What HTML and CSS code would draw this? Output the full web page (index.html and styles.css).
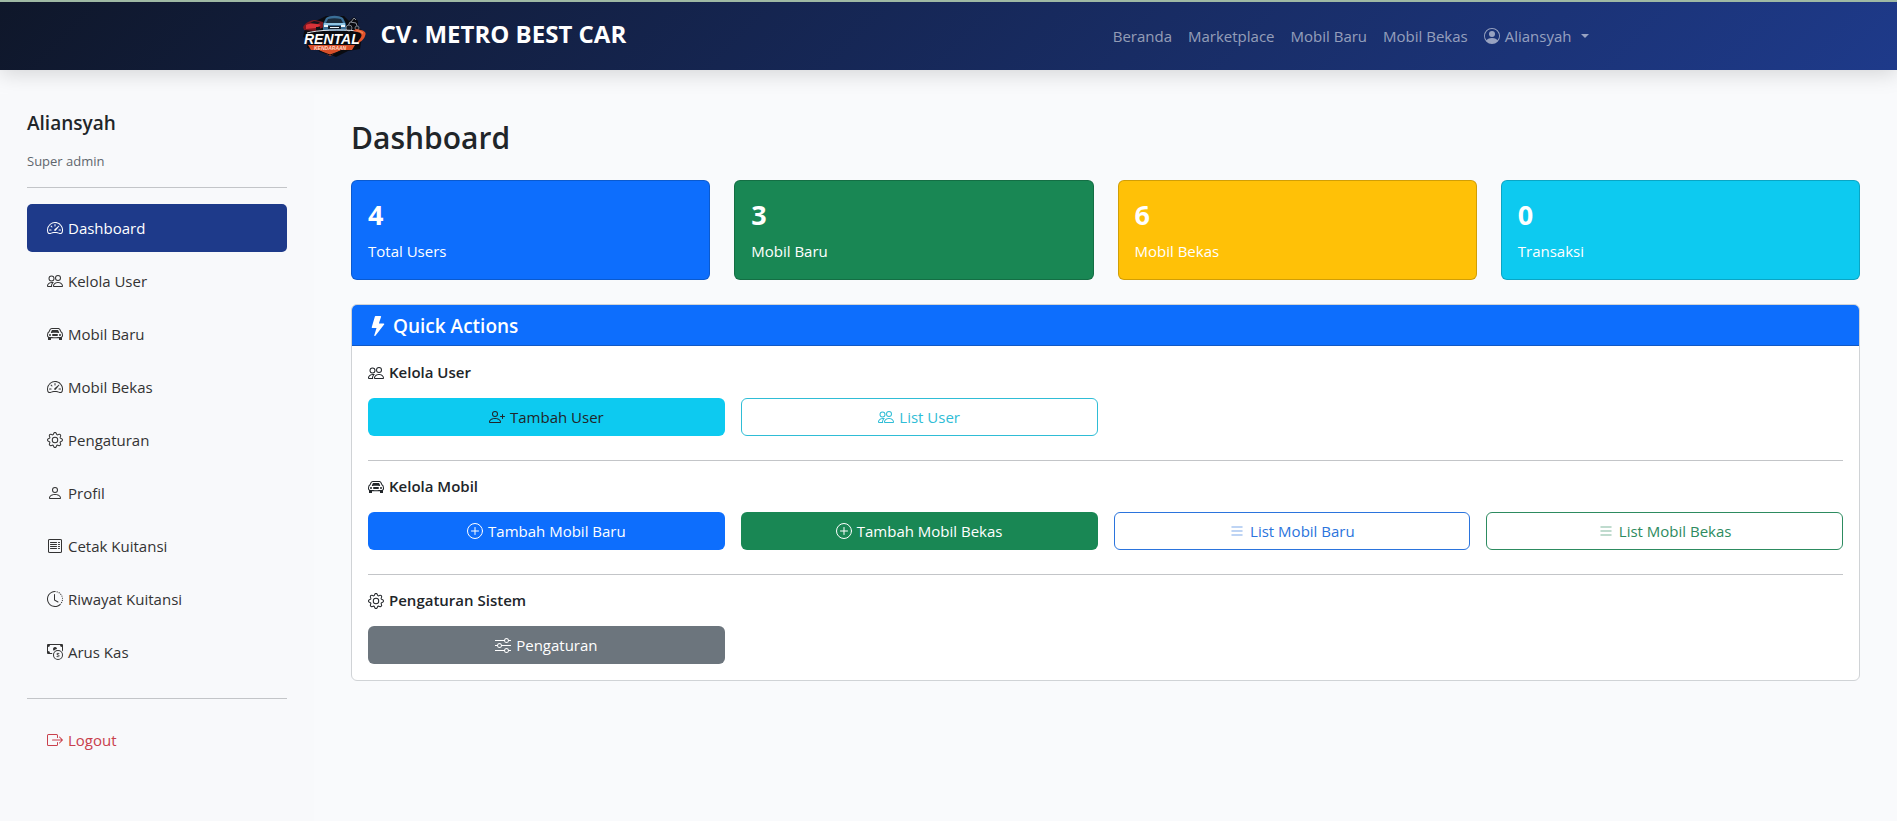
FILE: index.html
```html
<!DOCTYPE html>
<html lang="id">
<head>
<meta charset="utf-8">
<meta name="viewport" content="width=device-width, initial-scale=1">
<title>Dashboard - CV. METRO BEST CAR</title>
<link rel="stylesheet" href="styles.css">
</head>
<body>
<svg class="sprite" aria-hidden="true">
  <symbol id="speedometer" viewBox="0 0 16 16"><path d="M8 4a.5.5 0 0 1 .5.5V6a.5.5 0 0 1-1 0V4.500A.5.5 0 0 1 8 4M3.732 5.732a.5.5 0 0 1 .707 0l.915.914a.5.5 0 1 1-.708.708l-.914-.915a.5.5 0 0 1 0-.707M2 10a.5.5 0 0 1 .5-.5h1.586a.5.5 0 0 1 0 1H2.500A.5.5 0 0 1 2 10m9.500 0a.5.5 0 0 1 .5-.5h1.500a.5.5 0 0 1 0 1H12a.5.5 0 0 1-.5-.5m.754-4.246a.39.39 0 0 0-.527-.02L7.547 9.310a.91.91 0 1 0 1.302 1.258l3.434-4.297a.39.39 0 0 0-.029-.518z"/><path fill-rule="evenodd" d="M0 10a8 8 0 1 1 15.547 2.661c-.442 1.253-1.845 1.602-2.932 1.250C11.309 13.488 9.475 13 8 13c-1.474 0-3.310.488-4.615.911-1.087.352-2.490.003-2.932-1.250A8 8 0 0 1 0 10m8-7a7 7 0 0 0-6.603 9.329c.203.575.923.876 1.680.630C4.397 12.533 6.358 12 8 12s3.604.532 4.923.960c.757.245 1.477-.056 1.680-.631A7 7 0 0 0 8 3"/></symbol>
  <symbol id="people" viewBox="0 0 16 16"><path d="M15 14s1 0 1-1-1-4-5-4-5 3-5 4 1 1 1 1zm-7.978-1L7 12.996c.001-.264.167-1.030.760-1.720C8.312 10.629 9.282 10 11 10c1.717 0 2.687.630 3.240 1.276.593.690.758 1.457.760 1.720l-.008.002-.014.002zM11 7a2 2 0 1 0 0-4 2 2 0 0 0 0 4m3-2a3 3 0 1 1-6 0 3 3 0 0 1 6 0M6.936 9.280a6 6 0 0 0-1.230-.247A7 7 0 0 0 5 9c-4 0-5 3-5 4q0 1 1 1h4.216A2.240 2.240 0 0 1 5 13c0-1.010.377-2.042 1.090-2.904.243-.294.526-.569.846-.816M4.920 10A5.500 5.500 0 0 0 4 13H1c0-.260.164-1.030.760-1.724.545-.636 1.492-1.256 3.160-1.275ZM1.500 5.500a3 3 0 1 1 6 0 3 3 0 0 1-6 0m3-2a2 2 0 1 0 0 4 2 2 0 0 0 0-4"/></symbol>
  <symbol id="car" viewBox="0 0 16 16"><path d="M4 9a1 1 0 1 1-2 0 1 1 0 0 1 2 0m10 0a1 1 0 1 1-2 0 1 1 0 0 1 2 0M6 8a1 1 0 0 0 0 2h4a1 1 0 1 0 0-2zM4.862 4.276 3.906 6.190a.51.51 0 0 0 .497.731c.910-.073 2.350-.170 3.597-.170s2.688.097 3.597.170a.51.51 0 0 0 .497-.731l-.956-1.913A.5.5 0 0 0 10.691 4H5.309a.5.5 0 0 0-.447.276"/><path fill-rule="evenodd" d="M2.520 3.515A2.500 2.500 0 0 1 4.820 2h6.362c1 0 1.904.596 2.298 1.515l.792 1.848c.075.175.210.319.380.404.500.250.855.715.965 1.262l.335 1.679q.050.242.049.490v.413c0 .814-.390 1.543-1 1.997V13.500a.5.5 0 0 1-.5.5h-2a.5.5 0 0 1-.5-.5v-1.338c-1.292.048-2.745.088-4 .088s-2.708-.040-4-.088V13.500a.5.5 0 0 1-.5.5h-2a.5.5 0 0 1-.5-.5v-1.892c-.610-.454-1-1.183-1-1.997v-.413a2.500 2.500 0 0 1 .049-.490l.335-1.680c.110-.546.465-1.012.964-1.261a.8.8 0 0 0 .381-.404l.792-1.848ZM4.820 3a1.500 1.500 0 0 0-1.379.910l-.792 1.847a1.800 1.800 0 0 1-.853.904.8.8 0 0 0-.430.564L1.030 8.904a1.500 1.500 0 0 0-.030.294v.413c0 .796.620 1.448 1.408 1.484 1.555.070 3.786.155 5.592.155s4.037-.084 5.592-.155A1.480 1.480 0 0 0 15 9.611v-.413q0-.148-.030-.294l-.335-1.680a.8.8 0 0 0-.430-.563 1.800 1.800 0 0 1-.853-.904l-.792-1.848A1.500 1.500 0 0 0 11.180 3z"/></symbol>
  <symbol id="gear" viewBox="0 0 16 16"><path d="M8 4.754a3.246 3.246 0 1 0 0 6.492 3.246 3.246 0 0 0 0-6.492M5.754 8a2.246 2.246 0 1 1 4.492 0 2.246 2.246 0 0 1-4.492 0"/><path d="M9.796 1.343c-.527-1.790-3.065-1.790-3.592 0l-.094.319a.873.873 0 0 1-1.255.520l-.292-.160c-1.640-.892-3.433.902-2.540 2.541l.159.292a.873.873 0 0 1-.520 1.255l-.319.094c-1.790.527-1.790 3.065 0 3.592l.319.094a.873.873 0 0 1 .520 1.255l-.160.292c-.892 1.640.901 3.434 2.541 2.540l.292-.159a.873.873 0 0 1 1.255.520l.094.319c.527 1.790 3.065 1.790 3.592 0l.094-.319a.873.873 0 0 1 1.255-.520l.292.160c1.640.893 3.434-.902 2.540-2.541l-.159-.292a.873.873 0 0 1 .520-1.255l.319-.094c1.790-.527 1.790-3.065 0-3.592l-.319-.094a.873.873 0 0 1-.520-1.255l.160-.292c.893-1.640-.902-3.433-2.541-2.540l-.292.159a.873.873 0 0 1-1.255-.520zm-2.633.283c.246-.835 1.428-.835 1.674 0l.094.319a1.873 1.873 0 0 0 2.693 1.115l.291-.160c.764-.415 1.600.420 1.184 1.185l-.159.292a1.873 1.873 0 0 0 1.116 2.692l.318.094c.835.246.835 1.428 0 1.674l-.319.094a1.873 1.873 0 0 0-1.115 2.693l.160.291c.415.764-.420 1.600-1.185 1.184l-.291-.159a1.873 1.873 0 0 0-2.693 1.116l-.094.318c-.246.835-1.428.835-1.674 0l-.094-.319a1.873 1.873 0 0 0-2.692-1.115l-.292.160c-.764.415-1.600-.420-1.184-1.185l.159-.291A1.873 1.873 0 0 0 1.945 8.930l-.319-.094c-.835-.246-.835-1.428 0-1.674l.319-.094A1.873 1.873 0 0 0 3.060 4.377l-.160-.292c-.415-.764.420-1.600 1.185-1.184l.292.159a1.873 1.873 0 0 0 2.692-1.115z"/></symbol>
  <symbol id="person" viewBox="0 0 16 16"><path d="M8 8a3 3 0 1 0 0-6 3 3 0 0 0 0 6m2-3a2 2 0 1 1-4 0 2 2 0 0 1 4 0m4 8c0 1-1 1-1 1H3s-1 0-1-1 1-4 6-4 6 3 6 4m-1-.004c-.001-.246-.154-.986-.832-1.664C11.516 10.680 10.289 10 8 10s-3.516.680-4.168 1.332c-.678.678-.830 1.418-.832 1.664z"/></symbol>
  <symbol id="receipt" viewBox="0 0 16 16"><path fill="none" stroke="currentColor" stroke-linejoin="round" d="M2 1.200 3 2l1-1 1 1 1-1 1 1 1-1 1 1 1-1 1 1 1-1 1 1 1-.8.5.8v12l-.5.8-1-.8-1 1-1-1-1 1-1-1-1 1-1-1-1 1-1-1-1 1-1-1-1 .8-.5-.8V2z"/><path fill="none" stroke="currentColor" stroke-linecap="round" d="M3.500 4.500h6m-6 2h6m-6 2h6m-6 2h6m2-6h1m-1 2h1m-1 2h1m-1 2h1"/></symbol>
  <symbol id="history" viewBox="0 0 16 16"><path d="M8.515 1.019A7 7 0 0 0 8 1V0a8 8 0 0 1 .589.022zm2.004.450a7 7 0 0 0-.985-.299l.219-.976q.576.129 1.126.342zm1.370.710a7 7 0 0 0-.439-.270l.493-.870a8 8 0 0 1 .979.654l-.615.789a7 7 0 0 0-.418-.302zm1.834 1.790a7 7 0 0 0-.653-.796l.724-.690q.406.429.747.910zm.744 1.352a7 7 0 0 0-.214-.468l.893-.450a8 8 0 0 1 .450 1.088l-.950.313a7 7 0 0 0-.179-.483m.530 2.507a7 7 0 0 0-.100-1.025l.985-.170q.100.580.116 1.170zm-.131 1.538q.050-.254.081-.510l.993.123a8 8 0 0 1-.230 1.155l-.964-.267q.069-.247.120-.501m-.952 2.379q.276-.436.486-.908l.914.405q-.240.540-.555 1.038zm-.964 1.205q.183-.183.350-.378l.758.653a8 8 0 0 1-.401.432z"/><path d="M8 1a7 7 0 1 0 4.950 11.950l.707.707A8.001 8.001 0 1 1 8 0z"/><path d="M7.500 3a.5.5 0 0 1 .5.5v5.210l3.248 1.856a.5.5 0 0 1-.496.868l-3.500-2A.5.5 0 0 1 7 9V3.500a.5.5 0 0 1 .5-.5"/></symbol>
  <symbol id="cash" viewBox="0 0 16 16"><path fill-rule="evenodd" d="M11 15a4 4 0 1 0 0-8 4 4 0 0 0 0 8m5-4a5 5 0 1 1-10 0 5 5 0 0 1 10 0"/><path d="M9.438 11.944c.047.596.518 1.060 1.363 1.116v.440h.375v-.443c.875-.061 1.386-.529 1.386-1.207 0-.618-.390-.936-1.090-1.100l-.296-.070v-1.200c.376.043.614.248.671.532h.658c-.047-.575-.540-1.024-1.329-1.073V8.500h-.375v.450c-.747.073-1.255.522-1.255 1.158 0 .562.378.920 1.007 1.066l.248.061v1.272c-.384-.058-.639-.270-.696-.563h-.668zm1.360-1.354c-.369-.085-.569-.260-.569-.522 0-.294.216-.514.572-.578v1.100zm.432.746c.449.104.655.272.655.569 0 .339-.257.571-.709.614v-1.195z"/><path d="M1 0a1 1 0 0 0-1 1v8a1 1 0 0 0 1 1h4.083q.088-.517.258-1H3a2 2 0 0 0-2-2V3a2 2 0 0 0 2-2h10a2 2 0 0 0 2 2v3.528c.380.340.717.728 1 1.154V1a1 1 0 0 0-1-1z"/><path d="M9.998 5.083 10 5a2 2 0 1 0-3.132 1.650 6 6 0 0 1 3.130-1.567"/></symbol>
  <symbol id="logout" viewBox="0 0 16 16"><path d="M10 12.500a.5.5 0 0 1-.5.5h-8a.5.5 0 0 1-.5-.5v-9a.5.5 0 0 1 .5-.5h8a.5.5 0 0 1 .5.5v2a.5.5 0 0 0 1 0v-2A1.500 1.500 0 0 0 9.500 2h-8A1.500 1.500 0 0 0 0 3.500v9A1.500 1.500 0 0 0 1.500 14h8a1.500 1.500 0 0 0 1.500-1.500v-2a.5.5 0 0 0-1 0z"/><path d="M15.854 8.354a.5.5 0 0 0 0-.708l-3-3a.5.5 0 0 0-.708.708L14.293 7.500H5.500a.5.5 0 0 0 0 1h8.793l-2.147 2.146a.5.5 0 0 0 .708.708z"/></symbol>
  <symbol id="account" viewBox="0 0 16 16"><path d="M11 6a3 3 0 1 1-6 0 3 3 0 0 1 6 0"/><path fill-rule="evenodd" d="M0 8a8 8 0 1 1 16 0A8 8 0 0 1 0 8m8-7a7 7 0 0 0-5.468 11.370C3.242 11.226 4.805 10 8 10s4.757 1.225 5.468 2.370A7 7 0 0 0 8 1"/></symbol>
  <symbol id="lightning" viewBox="0 0 16 16"><path d="M5.520.359A.5.5 0 0 1 6 0h4a.5.5 0 0 1 .474.658L8.694 6H12.500a.5.5 0 0 1 .395.807l-7 9a.5.5 0 0 1-.873-.454L6.823 9.500H3.500a.5.5 0 0 1-.480-.641z"/></symbol>
  <symbol id="person-plus" viewBox="0 0 16 16"><path d="M6 8a3 3 0 1 0 0-6 3 3 0 0 0 0 6m2-3a2 2 0 1 1-4 0 2 2 0 0 1 4 0m4 8c0 1-1 1-1 1H1s-1 0-1-1 1-4 6-4 6 3 6 4m-1-.004c-.001-.246-.154-.986-.832-1.664C9.516 10.680 8.289 10 6 10s-3.516.680-4.168 1.332c-.678.678-.830 1.418-.832 1.664z"/><path d="M13.500 5a.5.5 0 0 1 .5.5V7h1.500a.5.5 0 0 1 0 1H14v1.500a.5.5 0 0 1-1 0V8h-1.500a.5.5 0 0 1 0-1H13V5.500a.5.5 0 0 1 .5-.5"/></symbol>
  <symbol id="plus" viewBox="0 0 16 16"><g fill="none" stroke="currentColor" stroke-linecap="round"><circle cx="8" cy="8" r="7.500"/><path d="M8 4.500v7M4.500 8h7"/></g></symbol>
  <symbol id="list" viewBox="0 0 16 16"><path fill="none" stroke="currentColor" stroke-width="1.500" stroke-linecap="round" d="M3 4h10M3 8h10M3 12h10"/></symbol>
  <symbol id="sliders" viewBox="0 0 16 16"><path fill-rule="evenodd" d="M11.500 2a1.500 1.500 0 1 0 0 3 1.500 1.500 0 0 0 0-3M9.050 3a2.500 2.500 0 0 1 4.900 0H16v1h-2.050a2.500 2.500 0 0 1-4.900 0H0V3zM4.500 7a1.500 1.500 0 1 0 0 3 1.500 1.500 0 0 0 0-3M2.050 8a2.500 2.500 0 0 1 4.900 0H16v1H6.950a2.500 2.500 0 0 1-4.900 0H0V8zm9.450 4a1.500 1.500 0 1 0 0 3 1.500 1.500 0 0 0 0-3m-2.450 1a2.500 2.500 0 0 1 4.900 0H16v1h-2.050a2.500 2.500 0 0 1-4.900 0H0v-1z"/></symbol>
</svg>

<header class="navbar">
  <div class="navbar-inner">
    <a class="brand" href="#">
      <svg class="logo" viewBox="0 0 66 42" role="img" aria-label="Rental Kendaraan">
        <path fill="#0a0b10" d="M2 17 6 9l12-5 6-3h18l5 5 5-4 4 4v6l5 4-3 18-12 2-12 6-14-6-15-3 1-9-5-2z"/>
        <path fill="#7d1820" d="M1 12c3-5 8-7 12-7l8 2 1 5-9 4-11-1z"/>
        <path fill="#d83238" d="M4 10c4-2 9-2 15 0l-5 3-10 1z"/>
        <path fill="#14151c" d="m8 8 4-2 6 1-2 2z"/>
        <path fill="#101218" d="M14 12h4v3h-4z"/>
        <path fill="#3a6f98" d="m21 9 3-6c4-3 13-3 17 0l3 6v7H21z"/>
        <path fill="#1c2c3c" d="m26 4-2 4h17l-2-4c-4-1-9-1-13 0z"/>
        <path fill="#8fc4e2" d="M22 8h21v2H22z"/>
        <path fill="#16202c" d="M26 11h13v3H26z"/>
        <path fill="#eef7fc" d="M22 10h4v2h-4zm17 0h4v2h-4zM28 12h9v1h-9z"/>
        <path fill="none" stroke="#8b909a" d="m45 13 3-6 6 1 2 6m-7-7 3-4 2 2"/>
        <circle cx="47" cy="13" r="3" fill="#15171d" stroke="#767b84"/>
        <circle cx="55" cy="13" r="2" fill="#15171d" stroke="#767b84"/>
        <path fill="none" stroke="#dfe2e8" d="M5 18c10-3 34-4 50-2"/>
        <path fill="#e4532b" d="M54 14c8 1 11 3 9 7-1 4-6 7-9 8 3-4 7-8 5-10-1-2-4-2-8-3z"/>
        <path fill="#f08a56" d="M55 15c4 1 7 2 6 4-2-2-4-2-7-3z"/>
        <path fill="#d84f29" d="M6 30h47l-3 5H39l-11 6-11-6H9z"/>
        <path fill="none" stroke="#0a0b10" d="m17 36 11 4 11-4"/>
        <text class="logo-name" x="2" y="29">RENTAL</text>
        <text class="logo-sub" x="12" y="35">KENDARAAN</text>
      </svg>
      <span class="brand-name">CV. METRO BEST CAR</span>
    </a>
    <nav class="topnav" aria-label="Utama">
      <a href="#">Beranda</a>
      <a href="#">Marketplace</a>
      <a href="#">Mobil Baru</a>
      <a href="#">Mobil Bekas</a>
      <button class="account" type="button" aria-haspopup="true"><svg class="icon"><use href="#account"/></svg>Aliansyah<span class="caret"></span></button>
    </nav>
  </div>
</header>

<div class="shell">
  <aside class="sidebar">
    <h2 class="user-name">Aliansyah</h2>
    <p class="user-role">Super admin</p>
    <hr>
    <nav class="menu" aria-label="Menu">
      <a class="active" href="#" aria-current="page"><svg class="icon"><use href="#speedometer"/></svg>Dashboard</a>
      <a href="#"><svg class="icon"><use href="#people"/></svg>Kelola User</a>
      <a href="#"><svg class="icon"><use href="#car"/></svg>Mobil Baru</a>
      <a href="#"><svg class="icon"><use href="#speedometer"/></svg>Mobil Bekas</a>
      <a href="#"><svg class="icon"><use href="#gear"/></svg>Pengaturan</a>
      <a href="#"><svg class="icon"><use href="#person"/></svg>Profil</a>
      <a href="#"><svg class="icon"><use href="#receipt"/></svg>Cetak Kuitansi</a>
      <a href="#"><svg class="icon"><use href="#history"/></svg>Riwayat Kuitansi</a>
      <a href="#"><svg class="icon"><use href="#cash"/></svg>Arus Kas</a>
      <hr>
      <a class="logout" href="#"><svg class="icon"><use href="#logout"/></svg>Logout</a>
    </nav>
  </aside>

  <main class="content">
    <h1>Dashboard</h1>
    <section class="stats">
      <div class="stat blue"><strong>4</strong><span>Total Users</span></div>
      <div class="stat green"><strong>3</strong><span>Mobil Baru</span></div>
      <div class="stat yellow"><strong>6</strong><span>Mobil Bekas</span></div>
      <div class="stat cyan"><strong>0</strong><span>Transaksi</span></div>
    </section>

    <section class="panel">
      <h2 class="panel-title"><svg class="icon"><use href="#lightning"/></svg>Quick Actions</h2>
      <div class="panel-body">
        <h3><svg class="icon"><use href="#people"/></svg>Kelola User</h3>
        <div class="actions">
          <a class="btn cyan" href="#"><svg class="icon"><use href="#person-plus"/></svg>Tambah User</a>
          <a class="btn outline-cyan" href="#"><svg class="icon"><use href="#people"/></svg>List User</a>
        </div>
        <hr>
        <h3><svg class="icon"><use href="#car"/></svg>Kelola Mobil</h3>
        <div class="actions">
          <a class="btn blue" href="#"><svg class="icon"><use href="#plus"/></svg>Tambah Mobil Baru</a>
          <a class="btn green" href="#"><svg class="icon"><use href="#plus"/></svg>Tambah Mobil Bekas</a>
          <a class="btn outline-blue" href="#"><svg class="icon faint"><use href="#list"/></svg>List Mobil Baru</a>
          <a class="btn outline-green" href="#"><svg class="icon faint"><use href="#list"/></svg>List Mobil Bekas</a>
        </div>
        <hr>
        <h3><svg class="icon"><use href="#gear"/></svg>Pengaturan Sistem</h3>
        <div class="actions">
          <a class="btn gray" href="#"><svg class="icon"><use href="#sliders"/></svg>Pengaturan</a>
        </div>
      </div>
    </section>
  </main>
</div>
</body>
</html>
```

FILE: styles.css
```css
* {
  box-sizing: border-box;
}

body {
  margin: 0;
  min-height: 100vh;
  display: flex;
  flex-direction: column;
  background: #f9fafc;
  color: #212529;
  font: 15px/24px "Segoe UI", "Open Sans", "Noto Sans", sans-serif;
}

h1, h2, h3, p {
  margin: 0;
}

a {
  color: inherit;
  text-decoration: none;
}

hr {
  width: 100%;
  height: 1px;
  margin: 0;
  border: 0;
  background: #c3c5c8;
}

.sprite {
  position: absolute;
  width: 0;
  height: 0;
}

.icon {
  flex: none;
  width: 16px;
  height: 16px;
  margin-right: 5px;
  fill: currentColor;
}

.icon.faint {
  opacity: .4;
}

/* Top bar */
.navbar {
  border-top: 2px solid #9fb9a4;
  background: linear-gradient(135deg, #0f172a, #1e3a8a);
  box-shadow: 0 4px 20px rgba(0, 0, 0, .15);
}

.navbar-inner {
  display: flex;
  align-items: center;
  justify-content: space-between;
  max-width: 1320px;
  height: 68px;
  margin: 0 auto;
  padding: 0 12px;
}

.brand {
  display: flex;
  align-items: center;
  gap: 12px;
  color: #fff;
  font-size: 24px;
  font-weight: 700;
  line-height: 32px;
}

.brand-name {
  padding-bottom: 4px;
}

.logo {
  width: 68px;
  height: 42px;
}

.logo-name {
  fill: #fff;
  font: italic 900 14px "Liberation Sans", sans-serif;
}

.logo-sub {
  fill: #ffd9c8;
  font: italic 700 5px "Liberation Sans", sans-serif;
}

.topnav {
  display: flex;
  align-items: center;
  color: rgba(255, 255, 255, .55);
}

.topnav a,
.account {
  padding: 8px;
}

.account {
  display: flex;
  align-items: center;
  border: 0;
  background: none;
  color: inherit;
  font: inherit;
}

.caret {
  margin-left: 9px;
  border-top: 4px solid;
  border-right: 4px solid transparent;
  border-left: 4px solid transparent;
}

/* Page frame */
.shell {
  flex: 1;
  display: grid;
  grid-template-columns: 314px minmax(0, 1fr);
  padding-top: 24px;
}

.sidebar {
  padding: 17px 27px;
  background: #f8f9fb;
}

.user-name {
  font-size: 19px;
  font-weight: 600;
  line-height: 24px;
}

.user-role {
  margin: 16px 0 15px;
  color: #5f666d;
  font-size: 13px;
  line-height: 21px;
}

.menu {
  display: flex;
  flex-direction: column;
  gap: 5px;
  margin-top: 16px;
  color: #333;
}

.menu a {
  display: flex;
  align-items: center;
  padding: 12px 20px;
  border-radius: 5px;
}

.menu .active {
  background: #1e3a8a;
  color: #fff;
}

.menu hr {
  margin: 17px 0 12px;
}

.menu .logout {
  color: #c9404c;
}

.content {
  padding: 25px 37px;
}

h1 {
  font-size: 30px;
  font-weight: 600;
  line-height: 38px;
}

/* Summary cards */
.stats {
  display: grid;
  grid-template-columns: repeat(4, 1fr);
  gap: 24px;
  margin: 23px 0 24px;
}

.stat {
  display: flex;
  flex-direction: column;
  gap: 7px;
  padding: 17px 16px 16px;
  border: 1px solid rgba(0, 0, 0, .18);
  border-radius: 6px;
  color: #fff;
}

.stat strong {
  font-size: 27px;
  font-weight: 700;
  line-height: 34px;
}

.blue {
  background-color: #0d6efd;
  color: #fff;
}

.green {
  background-color: #198754;
  color: #fff;
}

.yellow {
  background-color: #ffc107;
}

.cyan {
  background-color: #0dcaf0;
}

.gray {
  background-color: #6c757d;
  color: #fff;
}

/* Quick actions */
.panel {
  overflow: hidden;
  border: 1px solid #d0d3d6;
  border-radius: 6px;
  background: #fff;
}

.panel-title {
  display: flex;
  align-items: center;
  padding: 9px 16px 7px;
  border-bottom: 1px solid #1259c4;
  background: #0d6efd;
  color: #fff;
  font-size: 19px;
  font-weight: 600;
  line-height: 24px;
}

.panel-title .icon {
  width: 20px;
  height: 20px;
}

.panel-body {
  padding: 16px;
}

.panel-body h3 {
  display: flex;
  align-items: center;
  margin-bottom: 15px;
  font-size: 15px;
  font-weight: 600;
  line-height: 21px;
}

.panel-body hr {
  margin: 24px 0 15px;
}

.actions {
  display: grid;
  grid-template-columns: repeat(4, 1fr);
  gap: 16px;
}

.btn {
  display: flex;
  align-items: center;
  justify-content: center;
  padding: 6px 12px;
  border: 1px solid transparent;
  border-radius: 6px;
}

.outline-cyan {
  border-color: #2fbdd6;
  color: #2fbdd6;
}

.outline-blue {
  border-color: #2b74dd;
  color: #2b74dd;
}

.outline-green {
  border-color: #2d8b60;
  color: #2d8b60;
}
```
